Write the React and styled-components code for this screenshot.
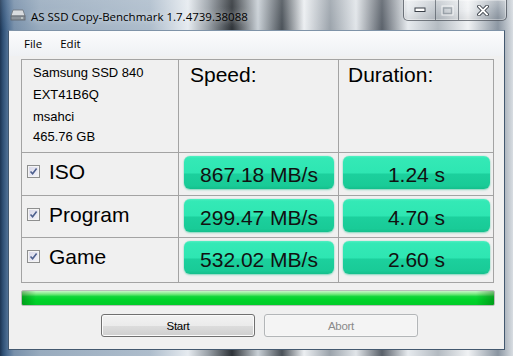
import React from 'react';
import styled, { createGlobalStyle } from 'styled-components';

const GlobalStyle = createGlobalStyle`
  html, body {
    margin: 0;
    padding: 0;
    width: 513px;
    height: 356px;
    overflow: hidden;
  }
  body {
    font-family: "Liberation Sans", Arial, sans-serif;
    color: #000;
  }
`;

const Window = styled.div`
  width: 513px;
  height: 356px;
  display: flex;
  flex-direction: column;
  box-sizing: border-box;
  background:
    linear-gradient(180deg, rgba(255,255,255,0.12) 0, rgba(255,255,255,0) 30px),
    linear-gradient(90deg,
      #1c3452 0, #2f5075 3px, #4a6b90 7px, #7890aa 14px, #98abbe 40px,
      #aebdcc 150px, #e6ebf0 188px, #9aa1a8 208px, #2e3338 232px,
      #c9d0d6 258px, #4a5158 282px, #eceff2 304px, #9ba3ab 330px,
      #e1e5e9 356px, #5a616a 382px, #e6eaee 408px, #b3bac1 438px,
      #f0f2f4 468px, #8a95a1 498px, #d8dde2 513px);
`;

const TitleBar = styled.div`
  height: 30px;
  display: flex;
  align-items: center;
  padding-left: 10px;
  flex-shrink: 0;
`;

const TitleText = styled.span`
  margin-left: 5px;
  font-family: "Open Sans", "Noto Sans", sans-serif;
  font-size: 11.5px;
  color: #000;
  text-shadow: 0 0 6px rgba(255,255,255,0.7);
  padding-top: 2px;
`;

const CaptionGroup = styled.div`
  margin-left: auto;
  margin-right: 6px;
  align-self: flex-start;
  height: 20px;
  display: flex;
  border: 1px solid rgba(40, 48, 58, 0.6);
  border-top: none;
  border-radius: 0 0 5px 5px;
  background: linear-gradient(180deg, rgba(255,255,255,0.3), rgba(255,255,255,0.08) 50%, rgba(0,0,0,0.06));
  box-shadow: inset 0 0 0 1px rgba(255,255,255,0.35);
  overflow: hidden;
`;

const CaptionButton = styled.div`
  width: ${p => p.w}px;
  display: flex;
  align-items: center;
  justify-content: center;
  & + & {
    border-left: 1px solid rgba(40, 48, 58, 0.5);
  }
`;

const Client = styled.div`
  flex: 1;
  margin: 0 8px 6px 8px;
  background: #f0f0f0;
  border: 1px solid #43586f;
  border-top-color: #7f93a8;
  display: flex;
  flex-direction: column;
`;

const MenuBar = styled.div`
  height: 25px;
  display: flex;
  align-items: center;
  padding-left: 6px;
  background: linear-gradient(180deg, #fbfcfd, #eff1f4);
  flex-shrink: 0;
`;

const MenuItem = styled.span`
  padding: 0 9px;
  font-family: "Open Sans", "Noto Sans", sans-serif;
  font-size: 11.5px;
  color: #000;
`;

const Body = styled.div`
  padding: 3px 10px 0 12px;
  display: flex;
  flex-direction: column;
`;

const Table = styled.div`
  display: grid;
  grid-template-columns: 156px 159px 154px;
  grid-template-rows: 92px 42px 41px 44px;
  gap: 1px;
  padding: 1px;
  background: #a3a3a3;
  width: max-content;
`;

const Cell = styled.div`
  background: #f0f0f0;
  display: flex;
  align-items: flex-start;
`;

const InfoCell = styled(Cell)`
  flex-direction: column;
  padding: 2px 11px;
  font-size: 13px;
`;

const InfoLine = styled.div`
  line-height: ${p => p.h}px;
  white-space: nowrap;
`;

const HeaderCell = styled(Cell)`
  padding: 3px ${p => p.pad}px;
  font-size: 21px;
  line-height: 24px;
`;

const LabelCell = styled(Cell)`
  padding: 7px 0 0 5px;
  font-size: 21px;
  line-height: 24px;
`;

const CheckBox = styled.span`
  width: 13px;
  height: 13px;
  box-sizing: border-box;
  margin-top: 5px;
  border: 1px solid #8e8f8f;
  background: linear-gradient(135deg, #d6d6e8, #f6f6fb);
  box-shadow: inset 0 0 0 1px #f4f4f4;
  display: flex;
  align-items: center;
  justify-content: center;
  flex-shrink: 0;
`;

const Label = styled.span`
  margin-left: 9px;
`;

const ValueCell = styled(Cell)`
  padding: 3px ${p => p.right}px 0 ${p => p.left}px;
`;

const ValueBox = styled.div`
  flex: 1;
  height: 33px;
  box-sizing: border-box;
  padding-top: 5px;
  line-height: 27px;
  border-radius: 6px;
  text-align: center;
  font-size: 21px;
  color: #111;
  background: linear-gradient(180deg,
    #52f0c2 0, #34e9b6 6%, #2ee6b2 52%, #1cd09d 54%, #19cb97 90%, #14bf8c 100%);
  box-shadow: 0 1px 2px rgba(20, 190, 140, 0.45), 0 0 1px rgba(20, 190, 140, 0.6);
  white-space: nowrap;
`;

const Progress = styled.div`
  margin-top: 7px;
  width: 474px;
  height: 16px;
  box-sizing: border-box;
  border: 1px solid #b9bcb9;
  border-radius: 2px;
  background:
    linear-gradient(90deg, rgba(0,70,0,0.35) 0, rgba(0,70,0,0) 14px, rgba(0,70,0,0) calc(100% - 18px), rgba(0,70,0,0.35) 100%),
    linear-gradient(180deg, #c9f6c9 0, #79ea80 22%, #12d63a 40%, #00d42a 60%, #00cc28 100%);
`;

const ButtonRow = styled.div`
  margin-top: 8px;
  display: flex;
  gap: 9px;
  padding-left: 80px;
`;

const Button = styled.div`
  width: 154px;
  height: 23px;
  box-sizing: border-box;
  border-radius: 3px;
  display: flex;
  align-items: center;
  justify-content: center;
  font-size: 11.5px;
  letter-spacing: -0.3px;
  border: 1px solid ${p => (p.disabled ? '#b3b6b8' : '#707070')};
  color: ${p => (p.disabled ? '#8a8a8a' : '#000')};
  background: ${p =>
    p.disabled
      ? '#f4f4f4'
      : 'linear-gradient(180deg, #f2f2f2 0, #ebebeb 50%, #dddddd 50%, #cfcfcf 100%)'};
  box-shadow: inset 0 0 0 1px ${p => (p.disabled ? '#f7f7f7' : '#fbfbfb')};
`;

const DriveIcon = () => (
  <svg width="16" height="14" viewBox="0 0 16 14">
    <path d="M3 2 L13 2 L15 8 L1 8 Z" fill="#d9dcdf" stroke="#6f757b" strokeWidth="0.8" />
    <rect x="1" y="8" width="14" height="4" fill="#8d949b" stroke="#5d636a" strokeWidth="0.8" />
    <rect x="11" y="9.5" width="2" height="1" fill="#e8f0e8" />
  </svg>
);

const Check = () => (
  <svg width="9" height="9" viewBox="0 0 9 9">
    <path d="M1.5 4.5 L3.6 6.8 L7.6 1.6" fill="none" stroke="#4c5f8e" strokeWidth="1.6" />
  </svg>
);

const MinGlyph = () => (
  <svg width="12" height="6" viewBox="0 0 12 6">
    <rect x="1" y="1" width="10" height="3.5" fill="#fff" stroke="#3a4048" strokeWidth="1" />
  </svg>
);

const MaxGlyph = () => (
  <svg width="13" height="11" viewBox="0 0 13 11">
    <rect x="1" y="1" width="11" height="9" fill="none" stroke="rgba(255,255,255,0.75)" strokeWidth="1" />
    <rect x="2.5" y="3" width="8" height="5.5" fill="none" stroke="rgba(110,120,130,0.5)" strokeWidth="1.4" />
  </svg>
);

const CloseGlyph = () => (
  <svg width="12" height="11" viewBox="0 0 12 11">
    <path d="M2 1.5 L10 9.5 M10 1.5 L2 9.5" stroke="#3a4048" strokeWidth="3.6" strokeLinecap="square" />
    <path d="M2 1.5 L10 9.5 M10 1.5 L2 9.5" stroke="#fff" strokeWidth="1.8" strokeLinecap="square" />
  </svg>
);

const rows = [
  { name: 'ISO', speed: '867.18 MB/s', time: '1.24 s' },
  { name: 'Program', speed: '299.47 MB/s', time: '4.70 s' },
  { name: 'Game', speed: '532.02 MB/s', time: '2.60 s' },
];

export default function App() {
  return (
    <>
      <GlobalStyle />
      <Window>
        <TitleBar>
          <DriveIcon />
          <TitleText>AS SSD Copy-Benchmark 1.7.4739.38088</TitleText>
          <CaptionGroup>
            <CaptionButton w={31}><MinGlyph /></CaptionButton>
            <CaptionButton w={22}><MaxGlyph /></CaptionButton>
            <CaptionButton w={47}><CloseGlyph /></CaptionButton>
          </CaptionGroup>
        </TitleBar>
        <Client>
          <MenuBar>
            <MenuItem>File</MenuItem>
            <MenuItem>Edit</MenuItem>
          </MenuBar>
          <Body>
            <Table>
              <InfoCell>
                <InfoLine h={22}>Samsung SSD 840</InfoLine>
                <InfoLine h={22}>EXT41B6Q</InfoLine>
                <InfoLine h={21}>msahci</InfoLine>
                <InfoLine h={20}>465.76 GB</InfoLine>
              </InfoCell>
              <HeaderCell pad={11}>Speed:</HeaderCell>
              <HeaderCell pad={9}>Duration:</HeaderCell>
              {rows.map(r => (
                <React.Fragment key={r.name}>
                  <LabelCell>
                    <CheckBox><Check /></CheckBox>
                    <Label>{r.name}</Label>
                  </LabelCell>
                  <ValueCell left={5} right={4}>
                    <ValueBox>{r.speed}</ValueBox>
                  </ValueCell>
                  <ValueCell left={4} right={3}>
                    <ValueBox>{r.time}</ValueBox>
                  </ValueCell>
                </React.Fragment>
              ))}
            </Table>
            <Progress />
            <ButtonRow>
              <Button>Start</Button>
              <Button disabled>Abort</Button>
            </ButtonRow>
          </Body>
        </Client>
      </Window>
    </>
  );
}
